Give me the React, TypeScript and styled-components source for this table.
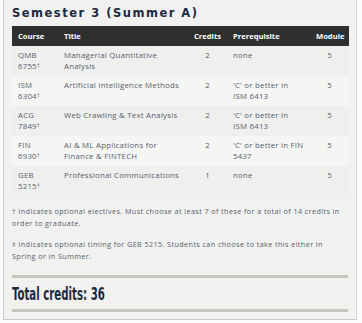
import styled, { createGlobalStyle } from "styled-components";

const GlobalStyle = createGlobalStyle`
    html, body {
        margin: 0;
        padding: 0;
        background: #fbfbfa;
    }
`;

const Panel = styled.section`
    margin-left: 3px;
    width: 354px;
    box-sizing: border-box;
    padding: 5px 8px 7px 8px;
    background: #f1f1f0;
    border-left: 1px solid #c9c9c7;
    border-right: 1px solid #d6d6d4;
    border-bottom: 1px solid #c9c9c7;
`;

const Heading = styled.h2`
    margin: 0 0 5px 0;
    font-family: "DejaVu Sans", sans-serif;
    font-weight: 700;
    font-size: 11.5px;
    letter-spacing: 1.5px;
    line-height: 16px;
    color: #1e2a40;
`;

const Table = styled.table`
    width: 337px;
    table-layout: fixed;
    border-collapse: collapse;
    font-family: "Open Sans", sans-serif;
`;

const HeadCell = styled.th<{ $align?: string }>`
    background: #2e2f2f;
    color: #ffffff;
    font-size: 7.6px;
    font-weight: 700;
    height: 20px;
    padding: 0 6px;
    text-align: ${p => p.$align || "left"};
`;

const Row = styled.tr<{ $alt?: boolean }>`
    background: ${p => (p.$alt ? "#f5f5f4" : "#efefee")};
`;

const Cell = styled.td<{ $align?: string }>`
    height: 30px;
    box-sizing: border-box;
    vertical-align: top;
    padding: 4px 6px 0 6px;
    font-size: 7.8px;
    line-height: 11px;
    letter-spacing: 0.25px;
    color: #56606c;
    text-align: ${p => p.$align || "left"};
`;

const Mark = styled.span`
    font-size: 6px;
    line-height: 0;
    vertical-align: 2px;
`;

const Note = styled.p`
    margin: 9px 0 0 0;
    font-family: "Open Sans", sans-serif;
    font-size: 7.2px;
    line-height: 12px;
    letter-spacing: 0.42px;
    color: #56606c;
`;

const Rule = styled.div`
    height: 3px;
    background: #c4c6bf;
`;

const Total = styled.div`
    line-height: 31px;
    height: 31px;
`;

const TotalText = styled.span`
    display: inline-block;
    font-family: "DejaVu Sans Condensed", "DejaVu Sans", sans-serif;
    font-weight: 700;
    font-size: 18px;
    color: #1e2a40;
    transform: scaleX(0.63);
    transform-origin: left center;
`;

const Footer = styled.div`
    margin-top: 13px;
`;

type Course = {
    code: string;
    num: string;
    mark: string;
    title: string;
    credits: number;
    prereq: string;
    module: number;
};

const courses: Course[] = [
    { code: "QMB", num: "6755", mark: "†", title: "Managerial Quantitative Analysis", credits: 2, prereq: "none", module: 5 },
    { code: "ISM", num: "6304", mark: "†", title: "Artificial Intelligence Methods", credits: 2, prereq: "'C' or better in ISM 6413", module: 5 },
    { code: "ACG", num: "7849", mark: "†", title: "Web Crawling & Text Analysis", credits: 2, prereq: "'C' or better in ISM 6413", module: 5 },
    { code: "FIN", num: "6930", mark: "†", title: "AI & ML Applications for Finance & FINTECH", credits: 2, prereq: "'C' or better in FIN 5437", module: 5 },
    { code: "GEB", num: "5215", mark: "‡", title: "Professional Communications", credits: 1, prereq: "none", module: 5 },
];

function App() {
    return <>
        <GlobalStyle />
        <Panel>
            <Heading>Semester 3 (Summer A)</Heading>
            <Table>
                <colgroup>
                    <col style={{ width: 46 }} />
                    <col style={{ width: 130 }} />
                    <col style={{ width: 39 }} />
                    <col style={{ width: 83 }} />
                    <col style={{ width: 39 }} />
                </colgroup>
                <thead>
                    <tr>
                        <HeadCell>Course</HeadCell>
                        <HeadCell>Title</HeadCell>
                        <HeadCell $align="right">Credits</HeadCell>
                        <HeadCell>Prerequisite</HeadCell>
                        <HeadCell $align="right">Module</HeadCell>
                    </tr>
                </thead>
                <tbody>
                    {courses.map((c, i) => (
                        <Row key={c.code} $alt={i % 2 === 1}>
                            <Cell>{c.code} {c.num}<Mark>{c.mark}</Mark></Cell>
                            <Cell>{c.title}</Cell>
                            <Cell $align="center">{c.credits}</Cell>
                            <Cell>{c.prereq}</Cell>
                            <Cell $align="center">{c.module}</Cell>
                        </Row>
                    ))}
                </tbody>
            </Table>
            <Note>† Indicates optional electives. Must choose at least 7 of these for a total of 14 credits in order to graduate.</Note>
            <Note>‡ Indicates optional timing for GEB 5215. Students can choose to take this either in Spring or in Summer.</Note>
            <Footer>
                <Rule />
                <Total><TotalText>Total credits: 36</TotalText></Total>
                <Rule />
            </Footer>
        </Panel>
    </>
}

export default App;
